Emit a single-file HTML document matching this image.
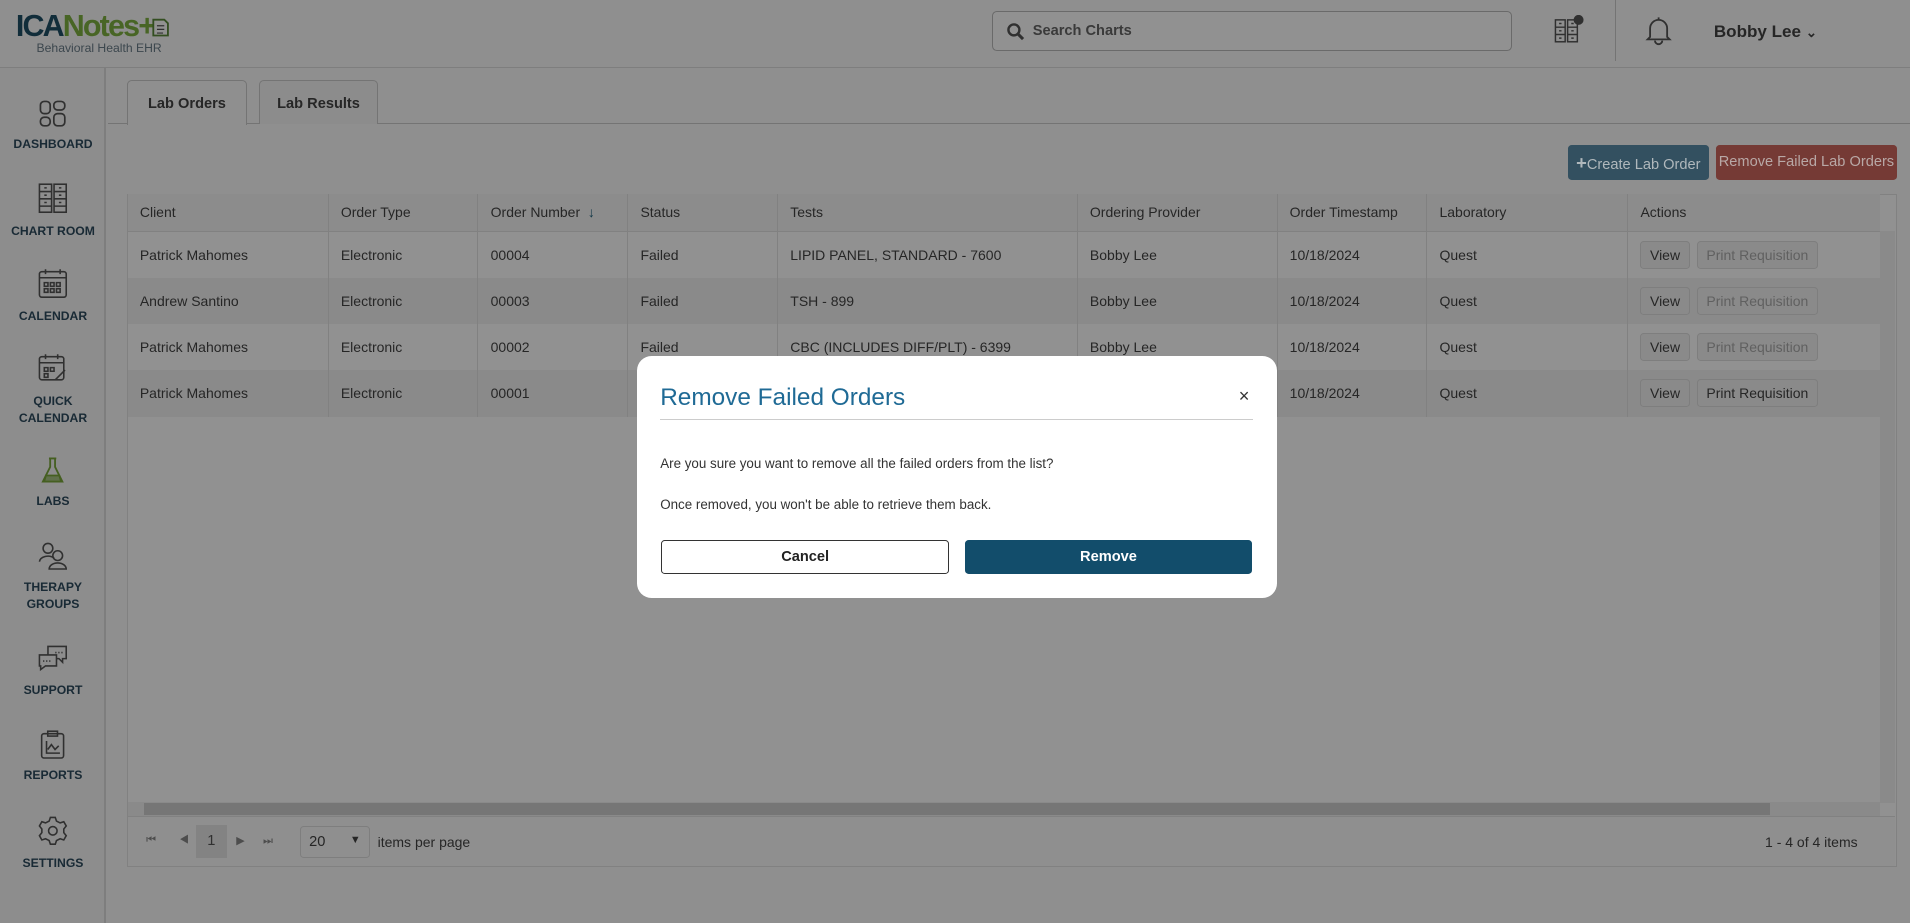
<!DOCTYPE html>
<html><head><meta charset="utf-8"><style>
*{box-sizing:border-box;margin:0;padding:0}
html,body{width:1910px;height:923px;overflow:hidden;background:#fff}
#root{zoom:1.2181;width:1568px;height:758px;position:relative;font-family:"Liberation Sans",sans-serif;color:#333;background:#fbfbfb;font-size:12px}
.abs{position:absolute}
.hdr{left:0;top:0;width:1568px;height:56px;background:#fbfbfb;border-bottom:1px solid #ddd}
.side{left:0;top:56px;width:87px;height:702px;background:#f8f8f8;border-right:2px solid #ddd}
.nav{position:absolute;left:0;width:87px;text-align:center;font-size:10px;color:#2d4b5e;font-weight:bold;line-height:14px}
.nav svg{display:block;margin:0 auto 7px}
.tab{top:66px;height:36px;border:1px solid #ccc;border-bottom:none;border-radius:4px 4px 0 0;background:#f7f7f7;font-size:12px;font-weight:bold;color:#444;text-align:center;line-height:38px}
table{border-collapse:collapse;position:absolute;left:104px;top:159px;width:1439px;font-size:11.5px}
td,th{height:38px;padding-left:10px;text-align:left;font-weight:normal;color:#444;border-left:1px solid #e3e3e3}
th{height:31px;background:#f7f7f7;border-bottom:1px solid #e3e3e3}
tr.a td{background:#fff}tr.b td{background:#f2f2f2}
.btn{display:inline-block;height:23px;line-height:22px;border:1px solid #ddd;border-radius:3px;padding:0 7px;background:#f2f2f2;font-size:11.5px;color:#444;margin-right:6px}
.dis{color:#aaa}
.ov{left:0;top:0;width:1568px;height:758px;background:rgba(0,0,0,0.43);z-index:50}
.modal{left:523px;top:292px;width:525px;height:199px;background:#fff;border-radius:12px;z-index:60}
</style></head><body><div id="root">
<div class="abs hdr">
 <div class="abs" style="left:13px;top:7px;font-size:25px;font-weight:bold;letter-spacing:-1.5px;line-height:28px"><span style="color:#1f4f66">ICA</span><span style="color:#7fb242">Notes+</span></div>
 <svg class="abs" style="left:120px;top:13px" width="20" height="20" viewBox="0 0 20 20"><path d="M6 3h9l3 3v10H6z" fill="#fff" stroke="#5b8a3a" stroke-width="1.5"/><path d="M9 8h6M9 11h6M9 14h5" stroke="#555" stroke-width="1"/></svg>
 <div class="abs" style="left:30px;top:34px;font-size:10px;color:#6a7d89">Behavioral Health EHR</div>
 <div class="abs" style="left:814px;top:9px;width:427px;height:33px;border:1px solid #bbb;border-radius:4px;background:#fff">
  <svg class="abs" style="left:11px;top:8px" width="16" height="16" viewBox="0 0 16 16"><circle cx="6.5" cy="6.5" r="4.5" fill="none" stroke="#555" stroke-width="2"/><path d="M10 10l4 4" stroke="#555" stroke-width="2.5"/></svg>
  <span class="abs" style="left:33px;top:9px;font-size:12px;font-weight:bold;color:#666">Search Charts</span></div>
 <svg class="abs" style="left:1275px;top:12px" width="26" height="26" viewBox="0 0 26 26" fill="none" stroke="#555" stroke-width="1.2"><rect x="2" y="4" width="8" height="18"/><rect x="12" y="4" width="8" height="18"/><path d="M2 10h8M2 16h8M12 10h8M12 16h8M5 7h2M5 13h2M5 19h2M15 7h2M15 13h2M15 19h2"/><circle cx="21" cy="4" r="3.5" fill="#555"/></svg>
 <div class="abs" style="left:1326px;top:0;width:1px;height:50px;background:#ccc"></div>
 <svg class="abs" style="left:1350px;top:12px" width="24" height="26" viewBox="0 0 24 26" fill="none" stroke="#555" stroke-width="1.5"><path d="M12 2v2M5 18V11a7 7 0 0 1 14 0v7l2 2H3z"/><path d="M9 21a3 3 0 0 0 6 0"/></svg>
 <div class="abs" style="left:1407px;top:18px;font-size:14px;font-weight:bold;color:#444">Bobby Lee <span style="font-size:11px">&#8964;</span></div>
</div>
<div class="abs side">
 <div class="nav" style="top:25px"><svg width="24" height="24" viewBox="0 0 24 24" fill="none" stroke="#555" stroke-width="1.4"><rect x="2" y="2" width="8" height="10" rx="3"/><rect x="13" y="2" width="9" height="7" rx="3"/><rect x="2" y="15" width="8" height="7" rx="3"/><rect x="13" y="12" width="9" height="10" rx="3"/></svg>DASHBOARD</div>
 <div class="nav" style="top:94px"><svg width="26" height="26" viewBox="0 0 26 26" fill="none" stroke="#555" stroke-width="1.3"><rect x="2" y="1" width="10" height="23"/><rect x="14" y="1" width="10" height="23"/><path d="M2 7h10M2 13h10M2 19h10M14 7h10M14 13h10M14 19h10M6 4h2M6 10h2M6 16h2M18 4h2M18 10h2M18 16h2"/></svg>CHART ROOM</div>
 <div class="nav" style="top:164px"><svg width="26" height="26" viewBox="0 0 26 26" fill="none" stroke="#555" stroke-width="1.3"><rect x="2" y="3" width="22" height="21" rx="2"/><path d="M2 8h22M7 1v4M19 1v4"/><path d="M6 12h3v3H6zM11 12h3v3h-3zM16 12h3v3h-3zM6 17h3v3H6zM11 17h3v3h-3zM16 17h3v3h-3z"/></svg>CALENDAR</div>
 <div class="nav" style="top:234px"><svg width="26" height="26" viewBox="0 0 26 26" fill="none" stroke="#555" stroke-width="1.3"><rect x="2" y="3" width="20" height="19" rx="2"/><path d="M2 8h20M7 1v4M17 1v4M6 12h3v3H6zM11 12h3v3h-3zM6 17h3v3H6zM15 22l8-8"/></svg>QUICK<br>CALENDAR</div>
 <div class="nav" style="top:318px"><svg width="24" height="24" viewBox="0 0 24 24" fill="none" stroke="#7aa83a" stroke-width="1.5"><path d="M9 2h6M10 2v7L4 21h16L14 9V2"/><path d="M6.5 16h11L19 21H5z" fill="#a9c585"/></svg>LABS</div>
 <div class="nav" style="top:388px"><svg width="26" height="24" viewBox="0 0 26 24" fill="none" stroke="#555" stroke-width="1.3"><circle cx="9" cy="6" r="4"/><path d="M2 17a7 5 0 0 1 12-3"/><circle cx="17" cy="12" r="4"/><path d="M10 23a7 5 0 0 1 14 0z"/></svg>THERAPY<br>GROUPS</div>
 <div class="nav" style="top:473px"><svg width="26" height="24" viewBox="0 0 26 24" fill="none" stroke="#555" stroke-width="1.3"><path d="M9 2h15v10h-3v3l-3-3h-9z"/><path d="M2 9h14v9H7l-4 3v-3H2z" fill="#f8f8f8"/><path d="M5 14h6M15 7h6" stroke-dasharray="1 1.5"/></svg>SUPPORT</div>
 <div class="nav" style="top:543px"><svg width="24" height="24" viewBox="0 0 24 24" fill="none" stroke="#555" stroke-width="1.3"><rect x="3" y="3" width="18" height="20" rx="2"/><rect x="8" y="1" width="8" height="4"/><path d="M7 9v10h11M8 16l3-4 3 4 3-3"/></svg>REPORTS</div>
 <div class="nav" style="top:613px"><svg width="26" height="26" viewBox="0 0 26 26" fill="none" stroke="#555" stroke-width="1.3"><path d="M11 2h4l1 3 3 1.5 3-1 2 3.5-2 2.5v3l2 2.5-2 3.5-3-1-3 1.5-1 3h-4l-1-3-3-1.5-3 1-2-3.5 2-2.5v-3l-2-2.5 2-3.5 3 1L10 5z"/><circle cx="13" cy="13" r="3.5"/></svg>SETTINGS</div>
</div>
<div class="abs" style="left:89px;top:101px;width:1479px;height:1px;background:#ccc"></div>
<div class="abs tab" style="left:104px;width:99px;background:#fbfbfb;height:37px">Lab Orders</div>
<div class="abs tab" style="left:213px;width:97px">Lab Results</div>
<div class="abs" style="left:104px;top:159px;width:1453px;height:553px;border:1px solid #e3e3e3;background:#fff"></div>
<table>
<tr><th style="width:165px">Client</th><th style="width:123px">Order Type</th><th style="width:123px">Order Number <span style="color:#1c5d7a">&nbsp;↓</span></th><th style="width:123px">Status</th><th style="width:246px">Tests</th><th style="width:164px">Ordering Provider</th><th style="width:123px">Order Timestamp</th><th style="width:165px">Laboratory</th><th>Actions</th></tr>
<tr class="a"><td>Patrick Mahomes</td><td>Electronic</td><td>00004</td><td>Failed</td><td>LIPID PANEL, STANDARD - 7600</td><td>Bobby Lee</td><td>10/18/2024</td><td>Quest</td><td><span class="btn">View</span><span class="btn dis">Print Requisition</span></td></tr>
<tr class="b"><td>Andrew Santino</td><td>Electronic</td><td>00003</td><td>Failed</td><td>TSH - 899</td><td>Bobby Lee</td><td>10/18/2024</td><td>Quest</td><td><span class="btn">View</span><span class="btn dis">Print Requisition</span></td></tr>
<tr class="a"><td>Patrick Mahomes</td><td>Electronic</td><td>00002</td><td>Failed</td><td>CBC (INCLUDES DIFF/PLT) - 6399</td><td>Bobby Lee</td><td>10/18/2024</td><td>Quest</td><td><span class="btn">View</span><span class="btn dis">Print Requisition</span></td></tr>
<tr class="b"><td>Patrick Mahomes</td><td>Electronic</td><td>00001</td><td>Failed</td><td>CBC (INCLUDES DIFF/PLT) - 6399</td><td>Bobby Lee</td><td>10/18/2024</td><td>Quest</td><td><span class="btn">View</span><span class="btn">Print Requisition</span></td></tr>
</table>
<div class="abs" style="left:1543px;top:190px;width:13px;height:469px;background:#f2f2f2"></div>
<div class="abs" style="left:105px;top:658px;width:1438px;height:12px;background:#f2f2f2"></div>
<div class="abs" style="left:118px;top:659px;width:1335px;height:10px;background:#cfcfcf"></div>
<div class="abs" style="left:105px;top:670px;width:1451px;height:41px;background:#fbfbfb;border-top:1px solid #e3e3e3"></div>
<div class="abs" style="left:120px;top:685px;font-size:9px;color:#888;letter-spacing:19px">⏮◀</div>
<div class="abs" style="left:161px;top:677px;width:25px;height:27px;background:#e6e6e6;text-align:center;line-height:27px;font-size:12px;color:#555">1</div>
<div class="abs" style="left:194px;top:685px;font-size:9px;color:#888;letter-spacing:15px">▶⏭</div>
<div class="abs" style="left:246px;top:678px;width:58px;height:26px;border:1px solid #ddd;border-radius:3px;padding:6px 7px;font-size:12px;color:#444">20<span style="float:right;font-size:9px">▼</span></div>
<div class="abs" style="left:310px;top:685px;font-size:11.5px;color:#444">items per page</div>
<div class="abs" style="left:1449px;top:685px;font-size:11.5px;color:#444">1 - 4 of 4 items</div>
<div class="abs ov"></div>
<div class="abs" style="z-index:55;left:1287px;top:119px;width:116px;height:29px;background:#335060;border-radius:3px;color:#b0b8bc;font-size:12px;line-height:29px;text-align:center"><b style="font-size:15px">+</b>Create Lab Order</div>
<div class="abs" style="z-index:55;left:1409px;top:119px;width:148px;height:29px;background:#753a35;border-radius:3px;color:#b8a8a6;font-size:12px;line-height:29px;text-align:center">Remove Failed Lab Orders</div>
<div class="abs modal">
 <div class="abs" style="left:19px;top:23px;font-size:20px;color:#1f6a95">Remove Failed Orders</div>
 <div class="abs" style="left:494px;top:24px;font-size:15px;color:#333">×</div>
 <div class="abs" style="left:19px;top:52px;width:487px;height:1px;background:#ccc"></div>
 <div class="abs" style="left:19px;top:82px;font-size:11px;color:#333">Are you sure you want to remove all the failed orders from the list?</div>
 <div class="abs" style="left:19px;top:116px;font-size:11px;color:#333">Once removed, you won't be able to retrieve them back.</div>
 <div class="abs" style="left:20px;top:151px;width:236px;height:28px;border:1px solid #333;border-radius:3px;text-align:center;line-height:27px;font-size:12px;font-weight:bold;color:#222">Cancel</div>
 <div class="abs" style="left:269px;top:151px;width:236px;height:28px;background:#124d6b;border-radius:3px;text-align:center;line-height:29px;font-size:12px;font-weight:bold;color:#fff">Remove</div>
</div>
</div></body></html>
